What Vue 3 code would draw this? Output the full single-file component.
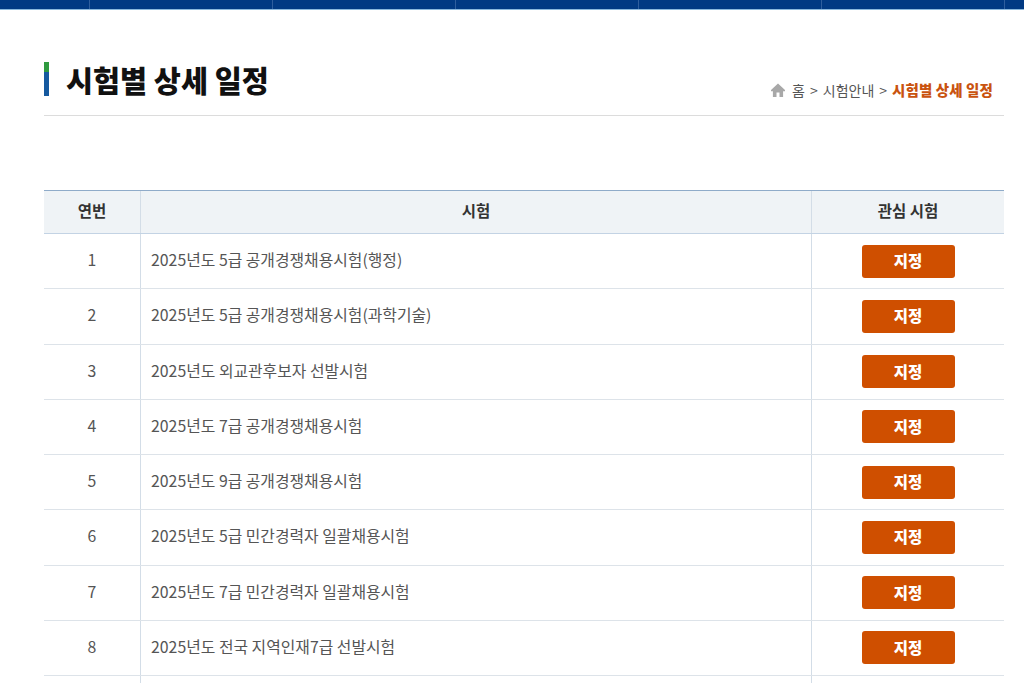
<script setup>
const navCount = 6
const rows = [
  '2025년도 5급 공개경쟁채용시험(행정)',
  '2025년도 5급 공개경쟁채용시험(과학기술)',
  '2025년도 외교관후보자 선발시험',
  '2025년도 7급 공개경쟁채용시험',
  '2025년도 9급 공개경쟁채용시험',
  '2025년도 5급 민간경력자 일괄채용시험',
  '2025년도 7급 민간경력자 일괄채용시험',
  '2025년도 전국 지역인재7급 선발시험'
]
</script>

<template>
  <div class="page">
    <div class="topbar">
      <div v-for="n in navCount" :key="n" class="nav-cell"></div>
    </div>
    <main class="content">
      <header class="head">
        <h1 class="title">시험별 상세 일정</h1>
        <div class="crumbs">
          <svg class="home" viewBox="0 0 14 14" width="14" height="14">
            <path d="M7 .6 0 7v1.2h1.9V14h3.6V9.4h3V14h3.6V8.2H14V7z" fill="#a8a8a8" />
          </svg>
          <span class="crumb-home">홈</span>
          <span>&gt;</span>
          <span>시험안내</span>
          <span>&gt;</span>
          <strong class="crumb-now">시험별 상세 일정</strong>
        </div>
      </header>
      <section class="table">
        <div class="row row-head">
          <div class="cell"><span class="lift-head">연번</span></div>
          <div class="cell"><span class="lift-head">시험</span></div>
          <div class="cell"><span class="lift-head">관심 시험</span></div>
        </div>
        <div v-for="(name, i) in rows" :key="i" class="row row-body">
          <div class="cell num"><span class="lift">{{ i + 1 }}</span></div>
          <div class="cell name"><span class="lift">{{ name }}</span></div>
          <div class="cell"><button class="pick" type="button"><span class="lift-btn">지정</span></button></div>
        </div>
        <div class="row row-body row-rest">
          <div class="cell"></div>
          <div class="cell"></div>
          <div class="cell"></div>
        </div>
      </section>
    </main>
  </div>
</template>

<style>
html, body { margin: 0; background: #fff; overflow: hidden; }
</style>

<style scoped>
.page {
  width: 1024px;
  height: 683px;
  overflow: hidden;
  font-family: "Noto Sans CJK KR", "Noto Sans", sans-serif;
  color: #444;
}
.topbar {
  display: flex;
  height: 9px;
  padding-left: 89px;
  background: #013a83;
  border-bottom: 1px solid #8ab8dc;
}
.nav-cell {
  width: 183px;
  flex: none;
  box-sizing: border-box;
  border-left: 1px solid #2f5f9e;
}
.content {
  width: 960px;
  margin-left: 44px;
}
.head {
  display: flex;
  justify-content: space-between;
  align-items: flex-end;
  height: 106px;
  box-sizing: border-box;
  padding-top: 52px;
  border-bottom: 1px solid #dcdcdc;
}
.title {
  margin: 0 0 19px;
  height: 34px;
  padding-left: 17px;
  border-left: 5px solid;
  border-image: linear-gradient(#2f9a3f 0 10px, #15599f 10px) 1;
  font-size: 29.4px;
  line-height: 34px;
  font-weight: 900;
  color: #111;
}
.crumbs {
  display: flex;
  align-items: center;
  gap: 5px;
  margin: 0 11px 15px 0;
  font-size: 14px;
  line-height: 20px;
  color: #555;
}
.home { margin-right: 2px; }
.crumb-now {
  color: #c9530f;
  font-size: 14.5px;
  font-weight: 900;
  letter-spacing: 0.1px;
}
.table {
  margin-top: 74px;
  border-top: 1px solid #8fabc9;
}
.row {
  display: grid;
  grid-template-columns: 96px 671px 193px;
  box-sizing: border-box;
}
.row-head {
  height: 43px;
  background: #eff3f6;
  border-bottom: 1px solid #c3d3e4;
  font-size: 15.5px;
  font-weight: 700;
  color: #333;
}
.row-body {
  height: 55.25px;
  border-bottom: 1px solid #dde3e9;
  font-size: 15.85px;
  color: #555;
}
.cell {
  display: flex;
  align-items: center;
  justify-content: center;
  min-width: 0;
}
.cell + .cell { border-left: 1px solid #d3dde7; }
.lift { margin-bottom: 3px; }
.lift-head { margin-bottom: 5px; }
.name {
  justify-content: flex-start;
  padding-left: 10px;
}
.pick {
  display: flex;
  align-items: center;
  justify-content: center;
  width: 93px;
  height: 33px;
  padding: 0;
  border: 0;
  border-radius: 3px;
  background: #cf4f00;
  color: #fff;
  font: 900 15.5px "Noto Sans CJK KR", sans-serif;
}
.lift-btn { margin-bottom: 2px; }
</style>
